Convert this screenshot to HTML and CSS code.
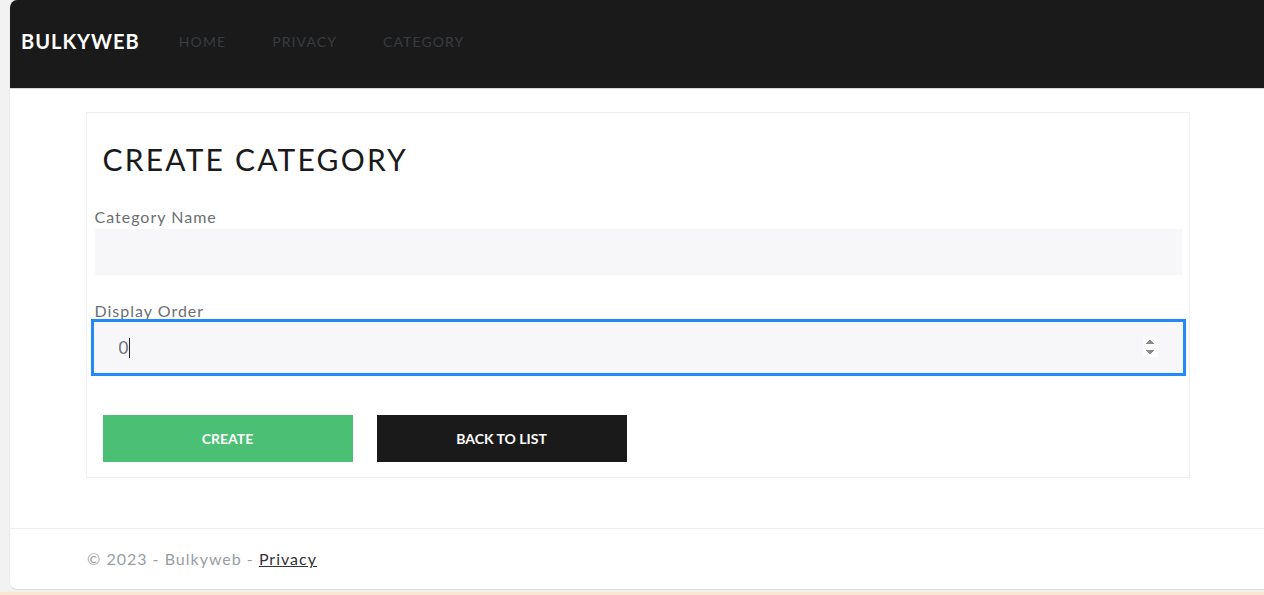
FILE: index.html
```html
<!DOCTYPE html>
<html lang="en">
<head>
<meta charset="utf-8">
<title>Create Category - Bulkyweb</title>
<link rel="stylesheet" href="styles.css">
</head>
<body>
<div class="frame">
  <div class="window">
    <header class="navbar">
      <a class="brand" href="#">BULKYWEB</a>
      <nav class="nav">
        <a href="#">HOME</a>
        <a href="#">PRIVACY</a>
        <a href="#">CATEGORY</a>
      </nav>
    </header>
    <main class="main">
      <form class="card">
        <h2 class="title">CREATE CATEGORY</h2>
        <div class="field">
          <label class="label" for="name">Category Name</label>
          <input class="control" id="name" type="text">
        </div>
        <div class="field">
          <label class="label" for="order">Display Order</label>
          <div class="input-wrap">
            <input class="control focused" id="order" type="number" value="0" autofocus>
            <span class="caret"></span>
          </div>
        </div>
        <div class="actions">
          <button class="btn btn-create" type="button">CREATE</button>
          <a class="btn btn-back" href="#">BACK TO LIST</a>
        </div>
      </form>
    </main>
    <footer class="footer">
      <div class="footer-inner">© 2023 - Bulkyweb - <a href="#">Privacy</a></div>
    </footer>
  </div>
  <div class="strip"></div>
</div>
</body>
</html>
```
FILE: styles.css
```css
* { box-sizing: border-box; }
html, body { margin: 0; height: 100%; }
body {
  background: #f2f2f2;
  font-family: Lato, "Open Sans", sans-serif;
  overflow: hidden;
}
.frame {
  height: 595px;
  display: flex;
  flex-direction: column;
}
.window {
  margin-left: 9px;
  height: 590px;
  background: #fff;
  border-radius: 8px 0 0 8px;
  border-bottom: 1px solid #dcdcdc;
  border-left: 1px solid #ececec;
  overflow: hidden;
  display: flex;
  flex-direction: column;
}
.strip {
  margin-top: 2px;
  height: 3px;
  background: #fbe6cf;
}
.navbar {
  height: 89px;
  flex-shrink: 0;
  background: #1a1a1a;
  border-bottom: 1px solid #d6d6d6;
  display: flex;
  align-items: center;
  padding-left: 11px;
  padding-bottom: 6px;
}
.brand {
  color: #fff;
  text-decoration: none;
  font-size: 20px;
  font-weight: 700;
  letter-spacing: 1px;
  margin-right: 16px;
}
.nav { display: flex; }
.nav a {
  color: #383c40;
  text-decoration: none;
  font-size: 14px;
  letter-spacing: 1.1px;
  padding: 0 23px;
}
.main {
  flex-shrink: 0;
  padding-top: 23px;
  display: flex;
  justify-content: center;
}
.card {
  width: 1104px;
  height: 366px;
  border: 1px solid #f0f0f0;
  padding: 27px 8px 0 8px;
  margin-left: 1px;
}
.title {
  margin: 0 0 30px 8px;
  font-size: 30px;
  font-weight: 400;
  letter-spacing: 2.2px;
  color: #1a1a1a;
  line-height: 1.2;
  padding-top: 1px;
}
.field { margin-bottom: 26px; }
.label {
  display: block;
  font-size: 16px;
  letter-spacing: 1px;
  color: #6b6f72;
  line-height: 20px;
  margin-bottom: 2px;
}
.control {
  display: block;
  width: 1087px;
  height: 46px;
  border: 0;
  background: #f7f7f9;
  padding: 0 24px;
  font-family: inherit;
  font-size: 17px;
  color: #6b6f72;
  outline: none;
  caret-color: transparent;
}
.input-wrap { position: relative; }
.control.focused {
  height: 49px;
  box-shadow: 0 0 0 1px #f7f7f9, 0 0 0 4px #2389f5;
}
.caret {
  position: absolute;
  left: 34px;
  top: 15px;
  width: 1px;
  height: 20px;
  background: #222;
}
.actions {
  display: flex;
  gap: 24px;
  padding-left: 8px;
  margin-top: 43px;
}
.btn {
  width: 250px;
  height: 47px;
  border: 0;
  display: flex;
  align-items: center;
  justify-content: center;
  color: #fff;
  font-family: inherit;
  font-size: 14px;
  font-weight: 700;
  text-decoration: none;
}
.btn-create { background: #4bbf73; }
.btn-back { background: #1a1a1a; }
.footer {
  border-top: 1px solid #efefef;
  height: 62px;
  margin-top: 50px;
}
.footer-inner {
  padding-left: 77px;
  line-height: 60px;
  font-size: 16px;
  letter-spacing: 1px;
  color: #999ea3;
}
.footer-inner a { color: #333; }
```
